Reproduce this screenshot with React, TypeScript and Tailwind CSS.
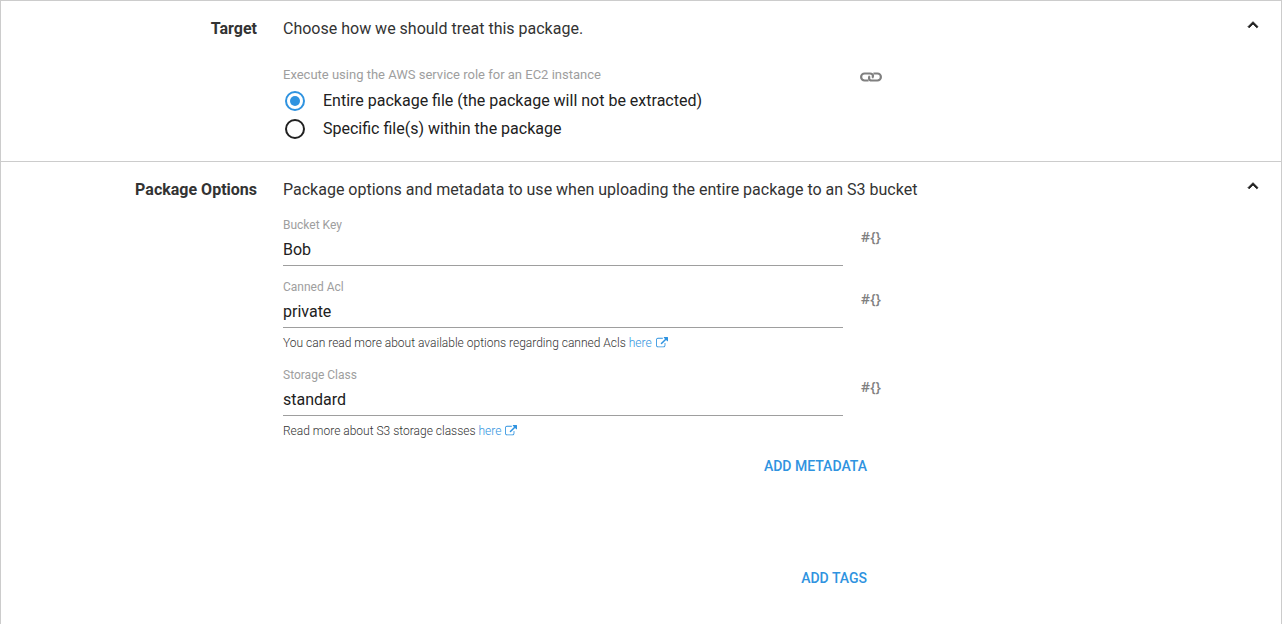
import { useId, useState } from "react";
import type { ReactNode } from "react";

function ChevronUp() {
  return (
    <svg viewBox="0 0 24 24" className="size-5" fill="currentColor" aria-hidden="true">
      <path d="M12 8l-6 6 1.41 1.41L12 10.83l4.59 4.58L18 14z" stroke="currentColor" strokeWidth="1" />
    </svg>
  );
}

function LinkIcon() {
  return (
    <svg
      viewBox="0 0 22 10"
      className="h-2.5 w-[22px]"
      fill="none"
      stroke="currentColor"
      strokeWidth="2.2"
      aria-hidden="true"
    >
      <path d="M8.6 8.5H4.6a3.5 3.5 0 0 1 0-7h5.4c1.7 0 3 1 3 2.6 0 .8-.3 1.3-.8 1.8" />
      <path d="M13.4 1.5h4a3.5 3.5 0 0 1 0 7h-5.4c-1.7 0-3-1-3-2.6 0-.8.3-1.3.8-1.8" />
    </svg>
  );
}

function ExternalLinkIcon() {
  return (
    <svg viewBox="0 0 1792 1792" className="ml-1 inline size-3 align-[-2px]" fill="currentColor" aria-hidden="true">
      <path d="M1408 928v320q0 119-84.5 203.5t-203.5 84.5h-832q-119 0-203.5-84.5t-84.5-203.5v-832q0-119 84.5-203.5t203.5-84.5h704q14 0 23 9t9 23v64q0 14-9 23t-23 9h-704q-66 0-113 47t-47 113v832q0 66 47 113t113 47h832q66 0 113-47t47-113v-320q0-14 9-23t23-9h64q14 0 23 9t9 23zm384-864v512q0 26-19 45t-45 19-45-19l-176-176-652 652q-10 10-23 10t-23-10l-114-114q-10-10-10-23t10-23l652-652-176-176q-19-19-19-45t19-45 45-19h512q26 0 45 19t19 45z" />
    </svg>
  );
}

function Section({ title, summary, children }: { title: string; summary: string; children: ReactNode }) {
  const [open, setOpen] = useState(true);
  return (
    <section className="grid grid-cols-[20%_minmax(0,1fr)_auto] border-t border-[#cccccc]">
      <h2 className="pt-4 text-right text-base leading-6 font-bold text-[#333333]">{title}</h2>
      <div className="pt-4 pl-[26px]">
        <p className="text-base leading-6 text-[#333333]">{summary}</p>
        {open && <div className="max-w-[600px]">{children}</div>}
      </div>
      <button
        type="button"
        aria-label={`Toggle ${title}`}
        aria-expanded={open}
        onClick={() => setOpen(!open)}
        className="mt-3.5 mr-[18px] self-start text-[#1f1f1f]"
      >
        <ChevronUp />
      </button>
    </section>
  );
}

function RadioOption({ label, checked, onSelect }: { label: string; checked: boolean; onSelect: () => void }) {
  return (
    <label className="flex h-7 items-center gap-[18px] pl-0.5 text-base text-[#212121]">
      <input
        type="radio"
        name="target"
        checked={checked}
        onChange={onSelect}
        className="grid size-5 appearance-none place-items-center rounded-full border-2 border-[#212121] before:size-2.5 before:rounded-full checked:border-[#2f93e0] checked:before:bg-[#2f93e0]"
      />
      {label}
    </label>
  );
}

function Field({ label, value, children }: { label: string; value: string; children?: ReactNode }) {
  const id = useId();
  return (
    <div>
      <div className="flex items-center gap-4">
        <div className="min-w-0 flex-1">
          <label htmlFor={id} className="block text-xs leading-4 text-[#9e9e9e]">
            {label}
          </label>
          <input
            id={id}
            type="text"
            defaultValue={value}
            className="block h-[33px] w-full border-b border-[#9e9e9e] text-base text-[#212121] outline-none"
          />
        </div>
        <button
          type="button"
          aria-label={`Bind ${label}`}
          className="w-6 pb-2.5 text-center font-['Open_Sans',sans-serif] text-sm leading-4 font-semibold text-[#808080]"
        >
          #{"{}"}
        </button>
      </div>
      {children}
    </div>
  );
}

function Hint({ children }: { children: ReactNode }) {
  return (
    <p className="pt-1.5 pb-0.5 text-xs leading-[18px] font-light text-[#333333]">
      {children}{" "}
      <a href="#" className="text-[#2f93e0]">
        here
        <ExternalLinkIcon />
      </a>
    </p>
  );
}

function TextButton({ children }: { children: ReactNode }) {
  return (
    <button type="button" className="block h-9 px-4 text-sm font-medium text-[#2f93e0] uppercase">
      {children}
    </button>
  );
}

export default function App() {
  const [target, setTarget] = useState("entire");
  return (
    <main className="min-h-screen border-x border-[#cccccc] bg-white font-['Roboto',sans-serif]">
      <Section title="Target" summary="Choose how we should treat this package.">
        <div role="radiogroup" aria-labelledby="target-caption" className="pt-6 pb-[18px]">
          <div className="flex h-5 items-center justify-between">
            <p id="target-caption" className="text-[13px] leading-5 text-[#9e9e9e]">
              Execute using the AWS service role for an EC2 instance
            </p>
            <button type="button" aria-label="Bind target" className="mr-px pt-1 text-[#808080]">
              <LinkIcon />
            </button>
          </div>
          <div className="pt-0.5">
            <RadioOption
              label="Entire package file (the package will not be extracted)"
              checked={target === "entire"}
              onSelect={() => setTarget("entire")}
            />
            <RadioOption
              label="Specific file(s) within the package"
              checked={target === "specific"}
              onSelect={() => setTarget("specific")}
            />
          </div>
        </div>
      </Section>

      <Section
        title="Package Options"
        summary="Package options and metadata to use when uploading the entire package to an S3 bucket"
      >
        <div className="flex flex-col gap-[13px] pt-[15px]">
          <Field label="Bucket Key" value="Bob" />
          <Field label="Canned Acl" value="private">
            <Hint>You can read more about available options regarding canned Acls</Hint>
          </Field>
          <Field label="Storage Class" value="standard">
            <Hint>Read more about S3 storage classes</Hint>
          </Field>
        </div>
        <div className="flex flex-col items-end gap-[76px] pt-1.5">
          <TextButton>Add Metadata</TextButton>
          <TextButton>Add Tags</TextButton>
        </div>
      </Section>
    </main>
  );
}
